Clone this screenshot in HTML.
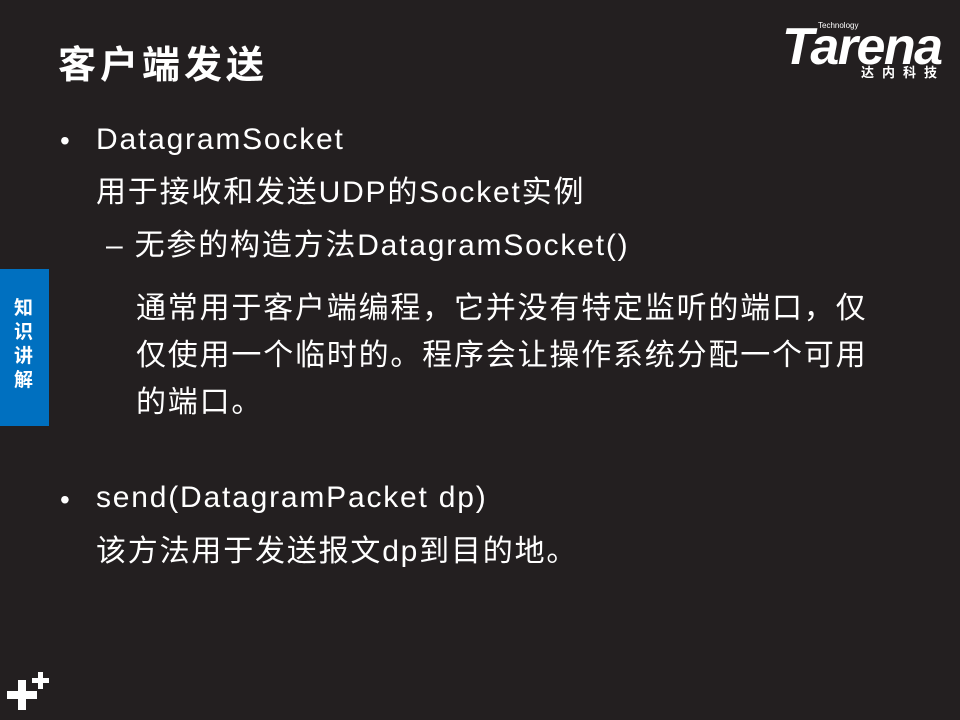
<!DOCTYPE html>
<html><head><meta charset="utf-8"><style>
body{margin:0;width:960px;height:720px;background:#231f20;position:relative;overflow:hidden;font-family:"Liberation Sans","Noto Sans CJK SC",sans-serif;color:#fff}
.t{position:absolute;white-space:nowrap;line-height:1}
.m{font-size:30px;letter-spacing:1.8px}
.b{position:absolute;background:#fff}
</style></head><body>
<div class="t" style="left:58px;top:47px;font-size:38px;font-weight:bold;letter-spacing:4px">客户端发送</div>
<div class="t" style="left:782px;top:21px;font-size:52px;font-weight:bold;font-style:italic;letter-spacing:-1.5px">Tarena</div>
<div class="t" style="left:818px;top:22px;font-size:8px">Technology</div>
<div class="t" style="left:861px;top:66px;font-size:13px;font-weight:bold;letter-spacing:8px">达内科技</div>
<div style="position:absolute;left:0;top:269px;width:49px;height:157px;background:#0070c0"></div>
<div class="t" style="left:14px;top:297px;font-size:19px;font-weight:bold;line-height:24px;width:20px;white-space:normal">知识讲解</div>
<div class="t" style="left:60px;top:127px;font-size:28px">•</div>
<div class="t m" style="left:96px;top:125px">DatagramSocket</div>
<div class="t m" style="left:96px;top:178px">用于接收和发送UDP的Socket实例</div>
<div class="t m" style="left:106px;top:231px">– 无参的构造方法DatagramSocket()</div>
<div class="t m" style="left:136px;top:285px;line-height:47px">通常用于客户端编程，它并没有特定监听的端口，仅<br>仅使用一个临时的。程序会让操作系统分配一个可用<br>的端口。</div>
<div class="t" style="left:60px;top:486px;font-size:28px">•</div>
<div class="t m" style="left:96px;top:483px">send(DatagramPacket dp)</div>
<div class="t m" style="left:96px;top:537px">该方法用于发送报文dp到目的地。</div>
<div class="b" style="left:7px;top:691px;width:30px;height:8px"></div>
<div class="b" style="left:18px;top:680px;width:8px;height:30px"></div>
<div class="b" style="left:32px;top:678px;width:17px;height:5px"></div>
<div class="b" style="left:38px;top:672px;width:5px;height:17px"></div>
</body></html>
